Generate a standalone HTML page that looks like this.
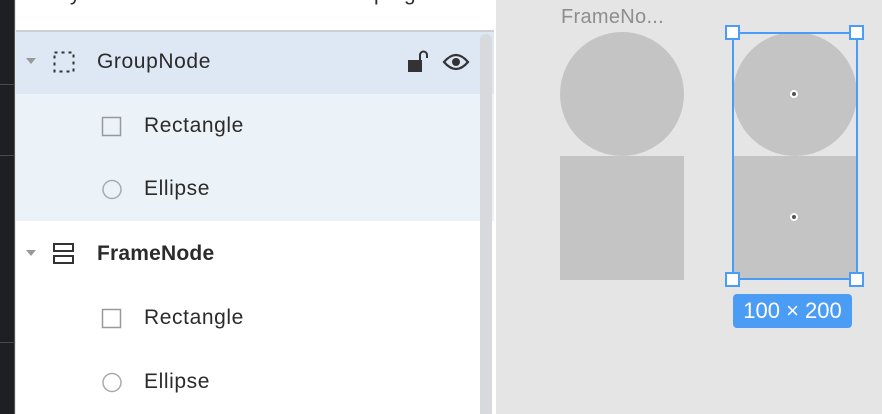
<!DOCTYPE html>
<html><head><style>
*{margin:0;padding:0;box-sizing:border-box}
body{width:882px;height:414px;overflow:hidden;background:#e5e5e5;font-family:"Liberation Sans",sans-serif;position:relative}
.strip{position:absolute;left:0;top:0;width:15px;height:414px;background:#1e1f22;border-right:1px solid #555}
.hl{position:absolute;left:0;width:15px;height:1px;background:#4a4a4e}
.panel{position:absolute;left:16px;top:0;width:480px;height:414px;background:#fff}
.t{position:absolute;font-size:21px;letter-spacing:0.6px;color:#2b2b2b;line-height:24px}
.row{position:absolute;left:16px;width:478px}
</style></head><body>
<div class="strip"></div>
<div class="hl" style="top:84px"></div><div class="hl" style="top:155px"></div><div class="hl" style="top:342px"></div>
<div class="panel"></div>
<div class="t" style="left:70px;top:-18px">y</div>
<div class="t" style="left:374px;top:-18px">p</div>
<div class="t" style="left:404px;top:-18px">g</div>
<div style="position:absolute;left:16px;top:30px;width:478px;height:2px;background:#cdd0d4"></div>
<div class="row" style="top:32px;height:62px;background:#dde8f4"></div>
<div class="row" style="top:94px;height:127px;background:#ecf3f8"></div>
<div style="position:absolute;left:480px;top:34px;width:12px;height:380px;background:#d8d9dc;border-radius:6px 6px 0 0"></div>
<svg style="position:absolute;left:26px;top:58px" width="10" height="8"><path d="M0 0h10L5 6z" fill="#999"/></svg>
<svg style="position:absolute;left:53px;top:51px" width="22" height="22"><rect x="1.5" y="1.5" width="19" height="19" fill="none" stroke="#333" stroke-width="2" stroke-dasharray="3 4"/></svg>
<div class="t" style="left:97px;top:50px">GroupNode</div>
<svg style="position:absolute;left:406px;top:49px" width="24" height="24"><path d="M2 11h14v12H2z" fill="#333"/><path d="M14 11V6a3.5 3.5 0 0 1 7 0v3" fill="none" stroke="#333" stroke-width="2"/></svg>
<svg style="position:absolute;left:442px;top:52px" width="28" height="20"><path d="M2 10Q14 -4 26 10Q14 24 2 10z" fill="none" stroke="#333" stroke-width="2.2"/><circle cx="14" cy="10" r="4" fill="#333"/></svg>
<svg style="position:absolute;left:101px;top:116px" width="22" height="22"><rect x="1.5" y="1.5" width="18" height="18" fill="none" stroke="#999" stroke-width="1.5"/></svg>
<div class="t" style="left:144px;top:114px">Rectangle</div>
<svg style="position:absolute;left:101px;top:179px" width="22" height="22"><circle cx="11" cy="10.5" r="9" fill="none" stroke="#aaa" stroke-width="1.5"/></svg>
<div class="t" style="left:144px;top:177px">Ellipse</div>
<svg style="position:absolute;left:26px;top:250px" width="10" height="8"><path d="M0 0h10L5 6z" fill="#999"/></svg>
<svg style="position:absolute;left:53px;top:243px" width="22" height="22"><rect x="1" y="1" width="19" height="7" fill="none" stroke="#333" stroke-width="2"/><rect x="1" y="13" width="19" height="7" fill="none" stroke="#333" stroke-width="2"/></svg>
<div class="t" style="left:97px;top:242px;font-weight:bold;letter-spacing:0.2px">FrameNode</div>
<svg style="position:absolute;left:101px;top:308px" width="22" height="22"><rect x="1.5" y="1.5" width="18" height="18" fill="none" stroke="#999" stroke-width="1.5"/></svg>
<div class="t" style="left:144px;top:306px">Rectangle</div>
<svg style="position:absolute;left:101px;top:372px" width="22" height="22"><circle cx="11" cy="10.5" r="9" fill="none" stroke="#aaa" stroke-width="1.5"/></svg>
<div class="t" style="left:144px;top:370px">Ellipse</div>
<div class="t" style="left:561px;top:5px;color:#8e8e8e;font-size:20px;letter-spacing:0.3px">FrameNo...</div>
<div style="position:absolute;left:560px;top:32px;width:124px;height:124px;border-radius:50%;background:#c4c4c4"></div>
<div style="position:absolute;left:560px;top:156px;width:124px;height:124px;background:#c4c4c4"></div>
<div style="position:absolute;left:733px;top:32px;width:124px;height:124px;border-radius:50%;background:#c4c4c4"></div>
<div style="position:absolute;left:733px;top:156px;width:124px;height:124px;background:#c4c4c4"></div>
<div style="position:absolute;left:732px;top:32px;width:126px;height:248px;border:2px solid #4a9cf5"></div>
<div style="position:absolute;left:790px;top:90px;width:8px;height:8px;border-radius:50%;background:#555;border:2px solid #fff"></div>
<div style="position:absolute;left:790px;top:213px;width:8px;height:8px;border-radius:50%;background:#555;border:2px solid #fff"></div>
<div style="position:absolute;left:725px;top:25px;width:15px;height:15px;background:#fff;border:2px solid #4a9cf5"></div>
<div style="position:absolute;left:849px;top:25px;width:15px;height:15px;background:#fff;border:2px solid #4a9cf5"></div>
<div style="position:absolute;left:725px;top:272px;width:15px;height:15px;background:#fff;border:2px solid #4a9cf5"></div>
<div style="position:absolute;left:849px;top:272px;width:15px;height:15px;background:#fff;border:2px solid #4a9cf5"></div>
<div style="position:absolute;left:733px;top:294px;width:119px;height:34px;background:#4a9cf5;border-radius:4px;color:#fff;font-size:22px;line-height:34px;text-align:center">100 × 200</div>
</body></html>
